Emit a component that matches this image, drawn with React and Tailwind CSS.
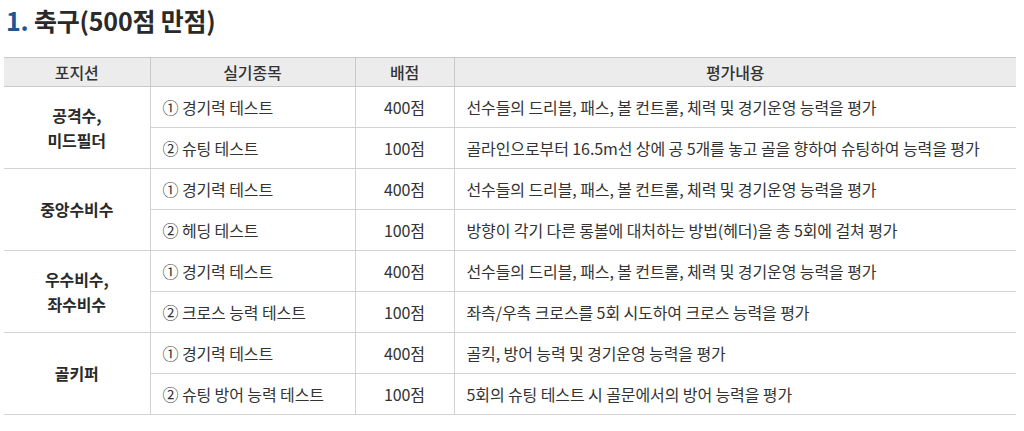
import React from "react";

const groups = [
  {
    pos: ["공격수,", "미드필더"],
    items: [
      ["① 경기력 테스트", "400점", "선수들의 드리블, 패스, 볼 컨트롤, 체력 및 경기운영 능력을 평가"],
      ["② 슈팅 테스트", "100점", "골라인으로부터 16.5m선 상에 공 5개를 놓고 골을 향하여 슈팅하여 능력을 평가"],
    ],
  },
  {
    pos: ["중앙수비수"],
    items: [
      ["① 경기력 테스트", "400점", "선수들의 드리블, 패스, 볼 컨트롤, 체력 및 경기운영 능력을 평가"],
      ["② 헤딩 테스트", "100점", "방향이 각기 다른 롱볼에 대처하는 방법(헤더)을 총 5회에 걸쳐 평가"],
    ],
  },
  {
    pos: ["우수비수,", "좌수비수"],
    items: [
      ["① 경기력 테스트", "400점", "선수들의 드리블, 패스, 볼 컨트롤, 체력 및 경기운영 능력을 평가"],
      ["② 크로스 능력 테스트", "100점", "좌측/우측 크로스를 5회 시도하여 크로스 능력을 평가"],
    ],
  },
  {
    pos: ["골키퍼"],
    items: [
      ["① 경기력 테스트", "400점", "골킥, 방어 능력 및 경기운영 능력을 평가"],
      ["② 슈팅 방어 능력 테스트", "100점", "5회의 슈팅 테스트 시 골문에서의 방어 능력을 평가"],
    ],
  },
];

export default function App() {
  return (
    <div className="w-[1024px] h-[431px] bg-white px-[4px] pt-[4px] font-['Noto_Sans_CJK_KR',sans-serif] text-[#333]">
      <h2 className="pl-[2px] text-[25px] font-bold leading-[32px] text-[#2a2a2a] tracking-[-0.2px]">
        <span className="text-[#1b5796]">1.</span> 축구(500점 만점)
      </h2>

      <table className="mt-[21px] w-[1012px] border-collapse table-fixed text-[16px] tracking-[-0.1px]">
        <colgroup>
          <col className="w-[146px]" />
          <col className="w-[205px]" />
          <col className="w-[99px]" />
          <col />
        </colgroup>
        <thead>
          <tr className="h-[29px] bg-[#ececec] border-t border-b border-[#c9c9c9]">
            <th className="font-medium text-center">포지션</th>
            <th className="font-medium text-center border-l border-[#c9c9c9]">실기종목</th>
            <th className="font-medium text-center border-l border-[#c9c9c9]">배점</th>
            <th className="font-medium text-center border-l border-[#c9c9c9]">평가내용</th>
          </tr>
        </thead>
        <tbody>
          {groups.map((g, gi) =>
            g.items.map((it, ii) => (
              <tr key={gi + "-" + ii} className="h-[41px] border-b border-[#d2d2d2]">
                {ii === 0 && (
                  <td rowSpan={2} className="text-center font-semibold leading-[25px] text-[#2a2a2a]">
                    {g.pos.map((p) => (
                      <div key={p}>{p}</div>
                    ))}
                  </td>
                )}
                <td className="pl-[12px] border-l border-[#d2d2d2]">{it[0]}</td>
                <td className="text-center border-l border-[#d2d2d2]">{it[1]}</td>
                <td className="pl-[12px] border-l border-[#d2d2d2] whitespace-nowrap">{it[2]}</td>
              </tr>
            ))
          )}
        </tbody>
      </table>
    </div>
  );
}
